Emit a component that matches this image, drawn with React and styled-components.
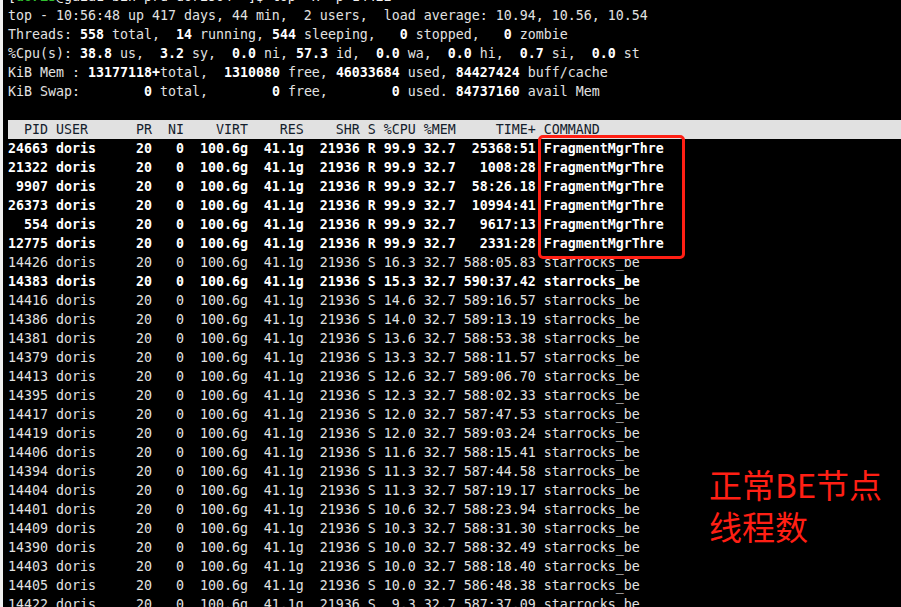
import React from "react";
import styled, { createGlobalStyle } from "styled-components";

const GlobalStyle = createGlobalStyle`
  html, body {
    margin: 0;
    padding: 0;
    background: #000;
  }
`;

// window, the pale strip on the left is the edge of the ssh client
const Screen = styled.div`
  position: relative;
  width: 901px;
  height: 607px;
  overflow: hidden;
  background: #000;
  border-left: 3px solid #f0f0f0;
  box-sizing: border-box;
`;

const Terminal = styled.pre`
  margin: -13px 0 0;
  padding-left: 5px;
  font-family: "DejaVu Sans Mono", "Liberation Mono", monospace;
  font-size: 13.29px;
  line-height: 19px;
  color: #e2e2e2;
`;

const Line = styled.div`
  height: 19px;
  white-space: pre;
  font-weight: ${(p) => (p.$bold ? 700 : 400)};
  color: ${(p) => (p.$bold ? "#fff" : "#e2e2e2")};
`;

const Prompt = styled(Line)`
  color: #f0f0f0;
`;

const Green = styled.span`
  color: #2fbf2f;
  font-weight: 700;
`;

const Header = styled(Line)`
  background: #e1e1e1;
  color: #14202c;
`;

const B = styled.b`
  color: #fff;
  font-weight: 700;
`;

const Highlight = styled.div`
  position: absolute;
  left: 535px;
  top: 135px;
  width: 147px;
  height: 124px;
  box-sizing: border-box;
  border: 3px solid #ff1f14;
  border-radius: 5px;
`;

const Note = styled.div`
  position: absolute;
  left: 706px;
  top: 463px;
  font-family: "Noto Sans CJK SC", "Noto Sans", sans-serif;
  font-size: 33px;
  line-height: 42px;
  color: #ff1f14;
`;

const top = [
  ["24663", "R", "99.9", "25368:51", "FragmentMgrThre", true],
  ["21322", "R", "99.9", "1008:28", "FragmentMgrThre", true],
  ["9907", "R", "99.9", "58:26.18", "FragmentMgrThre", true],
  ["26373", "R", "99.9", "10994:41", "FragmentMgrThre", true],
  ["554", "R", "99.9", "9617:13", "FragmentMgrThre", true],
  ["12775", "R", "99.9", "2331:28", "FragmentMgrThre", true],
  ["14426", "S", "16.3", "588:05.83", "starrocks_be"],
  ["14383", "S", "15.3", "590:37.42", "starrocks_be", true],
  ["14416", "S", "14.6", "589:16.57", "starrocks_be"],
  ["14386", "S", "14.0", "589:13.19", "starrocks_be"],
  ["14381", "S", "13.6", "588:53.38", "starrocks_be"],
  ["14379", "S", "13.3", "588:11.57", "starrocks_be"],
  ["14413", "S", "12.6", "589:06.70", "starrocks_be"],
  ["14395", "S", "12.3", "588:02.33", "starrocks_be"],
  ["14417", "S", "12.0", "587:47.53", "starrocks_be"],
  ["14419", "S", "12.0", "589:03.24", "starrocks_be"],
  ["14406", "S", "11.6", "588:15.41", "starrocks_be"],
  ["14394", "S", "11.3", "587:44.58", "starrocks_be"],
  ["14404", "S", "11.3", "587:19.17", "starrocks_be"],
  ["14401", "S", "10.6", "588:23.94", "starrocks_be"],
  ["14409", "S", "10.3", "588:31.30", "starrocks_be"],
  ["14390", "S", "10.0", "588:32.49", "starrocks_be"],
  ["14403", "S", "10.0", "588:18.40", "starrocks_be"],
  ["14405", "S", "10.0", "586:48.38", "starrocks_be"],
  ["14422", "S", "9.3", "587:37.09", "starrocks_be"],
];

const formatRow = ([pid, state, cpu, time, cmd]) =>
  `${pid.padStart(5)} doris     20   0  100.6g  41.1g  21936 ${state} ${cpu.padStart(4)} 32.7 ${time.padStart(9)} ${cmd}`;

export default function App() {
  return (
    <Screen>
      <GlobalStyle />
      <Terminal>
        <Prompt>
          [<Green>doris</Green>@gaia1 bin-prd-doris04 ~]$ top -H -p 14422
        </Prompt>
        <Line>top - 10:56:48 up 417 days, 44 min,  2 users,  load average: 10.94, 10.56, 10.54</Line>
        <Line>
          Threads: <B>558</B> total,  <B>14</B> running, <B>544</B> sleeping,   <B>0</B> stopped,   <B>0</B> zombie
        </Line>
        <Line>
          %Cpu(s): <B>38.8</B> us,  <B>3.2</B> sy,  <B>0.0</B> ni, <B>57.3</B> id,  <B>0.0</B> wa,  <B>0.0</B> hi,  <B>0.7</B> si,  <B>0.0</B> st
        </Line>
        <Line>
          KiB Mem : <B>13177118+</B>total,  <B>1310080</B> free, <B>46033684</B> used, <B>84427424</B> buff/cache
        </Line>
        <Line>
          KiB Swap:        <B>0</B> total,        <B>0</B> free,        <B>0</B> used. <B>84737160</B> avail Mem
        </Line>
        <Line> </Line>
        <Header>{"  PID USER      PR  NI    VIRT    RES    SHR S %CPU %MEM     TIME+ COMMAND"}</Header>
        {top.map((row) => (
          <Line key={row[0]} $bold={row[5]}>
            {formatRow(row)}
          </Line>
        ))}
      </Terminal>
      <Highlight />
      <Note>
        正常BE节点
        <br />
        线程数
      </Note>
    </Screen>
  );
}
